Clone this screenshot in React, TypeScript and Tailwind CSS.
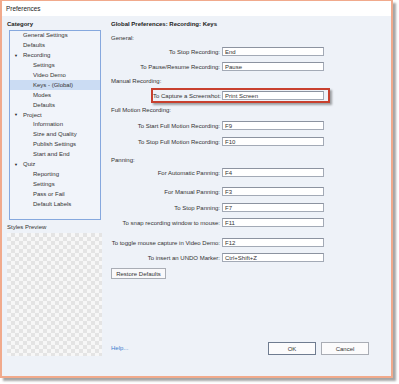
import type { ReactNode } from "react";

type TreeItem = { label: string; level: 0 | 1; group?: boolean; selected?: boolean };

const treeItems: TreeItem[] = [
  { label: "General Settings", level: 0 },
  { label: "Defaults", level: 0 },
  { label: "Recording", level: 0, group: true },
  { label: "Settings", level: 1 },
  { label: "Video Demo", level: 1 },
  { label: "Keys - (Global)", level: 1, selected: true },
  { label: "Modes", level: 1 },
  { label: "Defaults", level: 1 },
  { label: "Project", level: 0, group: true },
  { label: "Information", level: 1 },
  { label: "Size and Quality", level: 1 },
  { label: "Publish Settings", level: 1 },
  { label: "Start and End", level: 1 },
  { label: "Quiz", level: 0, group: true },
  { label: "Reporting", level: 1 },
  { label: "Settings", level: 1 },
  { label: "Pass or Fail", level: 1 },
  { label: "Default Labels", level: 1 },
];

function KeyInput({ value }: { value: string }) {
  return (
    <div className="flex h-[9px] w-[102px] shrink-0 items-center border border-[#a3aab6] border-t-[#8c93a0] bg-white pl-[2px] leading-none">
      {value}
    </div>
  );
}

function KeyRow({ label, value, mt }: { label: string; value: string; mt: string }) {
  return (
    <div className={`flex items-center ${mt}`}>
      <span className="w-[109px] shrink-0 text-right leading-none whitespace-nowrap">{label}</span>
      <span className="ml-[2px]">
        <KeyInput value={value} />
      </span>
    </div>
  );
}

function Section({ children, mt }: { children: ReactNode; mt: string }) {
  return <div className={`h-[8px] leading-[8px] whitespace-nowrap ${mt}`}>{children}</div>;
}

export default function App() {
  return (
    <div className="h-[384px] w-[399px] bg-white font-['Liberation_Sans',Arial,sans-serif] text-[6px] text-[#333]">
      <div className="flex h-[378px] w-[393px] flex-col border-2 border-t border-[#f1aa8c] bg-[#eef2f8] shadow-[3px_3px_2px_rgba(0,0,0,0.35)]">
        <div className="flex h-[15px] items-center bg-white pl-[4px] text-[6.4px] text-[#222]">Preferences</div>

        <div className="flex flex-1">
          {/* left: category tree + preview */}
          <div className="flex w-[101px] shrink-0 flex-col pl-[5px] pt-[4px]">
            <div className="h-[8px] font-bold leading-[8px] text-[#222]">Category</div>
            <div className="ml-[2px] mt-[2px] h-[190px] w-[92px] border border-[#86a8de] bg-[#f1f4fa]">
              {treeItems.map((item, i) => (
                <div
                  key={i}
                  className={`flex h-[9.9px] items-center whitespace-nowrap ${item.selected ? "bg-[#cbdcf3]" : ""} ${item.level === 0 ? "pl-[13px]" : "pl-[23px]"}`}
                >
                  {item.group && <span className="-ml-[9px] mr-[4px] w-[5px] text-[4px] text-[#222]">▼</span>}
                  {item.label}
                </div>
              ))}
            </div>
            <div className="mt-[3px] h-[8px] leading-[8px]">Styles Preview</div>
            <div className="mt-[2px] h-[123px] w-[95px] bg-[conic-gradient(#e4e4e4_25%,#f7f7f7_0_50%,#e4e4e4_0_75%,#f7f7f7_0)] bg-[length:8px_8px]" />
          </div>

          {/* right: key settings */}
          <div className="flex flex-1 flex-col pl-[8px] pt-[4px]">
            <div className="h-[8px] font-bold leading-[8px] text-[#222]">Global Preferences: Recording: Keys</div>
            <Section mt="mt-[6px]">General:</Section>
            <KeyRow mt="mt-[5px]" label="To Stop Recording:" value="End" />
            <KeyRow mt="mt-[6px]" label="To Pause/Resume Recording:" value="Pause" />
            <Section mt="mt-[6px]">Manual Recording:</Section>
            <div className="mt-[3px] flex">
              <div className="ml-[40px] flex h-[15px] w-[179px] shrink-0 items-center border-2 border-[#c8402e] shadow-[2px_2px_2px_rgba(0,0,0,0.35)]">
                <span className="w-[67px] shrink-0 text-right leading-none whitespace-nowrap">To Capture a Screenshot:</span>
                <span className="ml-[2px]">
                  <KeyInput value="Print Screen" />
                </span>
              </div>
            </div>
            <Section mt="mt-[3px]">Full Motion Recording:</Section>
            <KeyRow mt="mt-[7px]" label="To Start Full Motion Recording:" value="F9" />
            <KeyRow mt="mt-[7px]" label="To Stop Full Motion Recording:" value="F10" />
            <Section mt="mt-[10px]">Panning:</Section>
            <KeyRow mt="mt-[4px]" label="For Automatic Panning:" value="F4" />
            <KeyRow mt="mt-[10px]" label="For Manual Panning:" value="F3" />
            <KeyRow mt="mt-[7px]" label="To Stop Panning:" value="F7" />
            <KeyRow mt="mt-[6px]" label="To snap recording window to mouse:" value="F11" />
            <KeyRow mt="mt-[11px]" label="To toggle mouse capture in Video Demo:" value="F12" />
            <KeyRow mt="mt-[6px]" label="To insert an UNDO Marker:" value="Ctrl+Shift+Z" />
            <div className="mt-[6px]">
              <button className="flex h-[11px] w-[55px] items-center justify-center border border-[#a9adb5] bg-[#f9f9fb] leading-none whitespace-nowrap">
                Restore Defaults
              </button>
            </div>

            <div className="mt-auto mb-[21px] flex items-center pr-[22px]">
              <span className="text-[#3a7ccf]">Help...</span>
              <button className="ml-auto flex h-[13px] w-[48px] items-center justify-center border border-[#6f7c90] bg-[#fbfbfc] leading-none">
                OK
              </button>
              <button className="ml-[5px] flex h-[13px] w-[48px] items-center justify-center border border-[#a9adb5] bg-[#fbfbfc] leading-none">
                Cancel
              </button>
            </div>
          </div>
        </div>
      </div>
    </div>
  );
}
